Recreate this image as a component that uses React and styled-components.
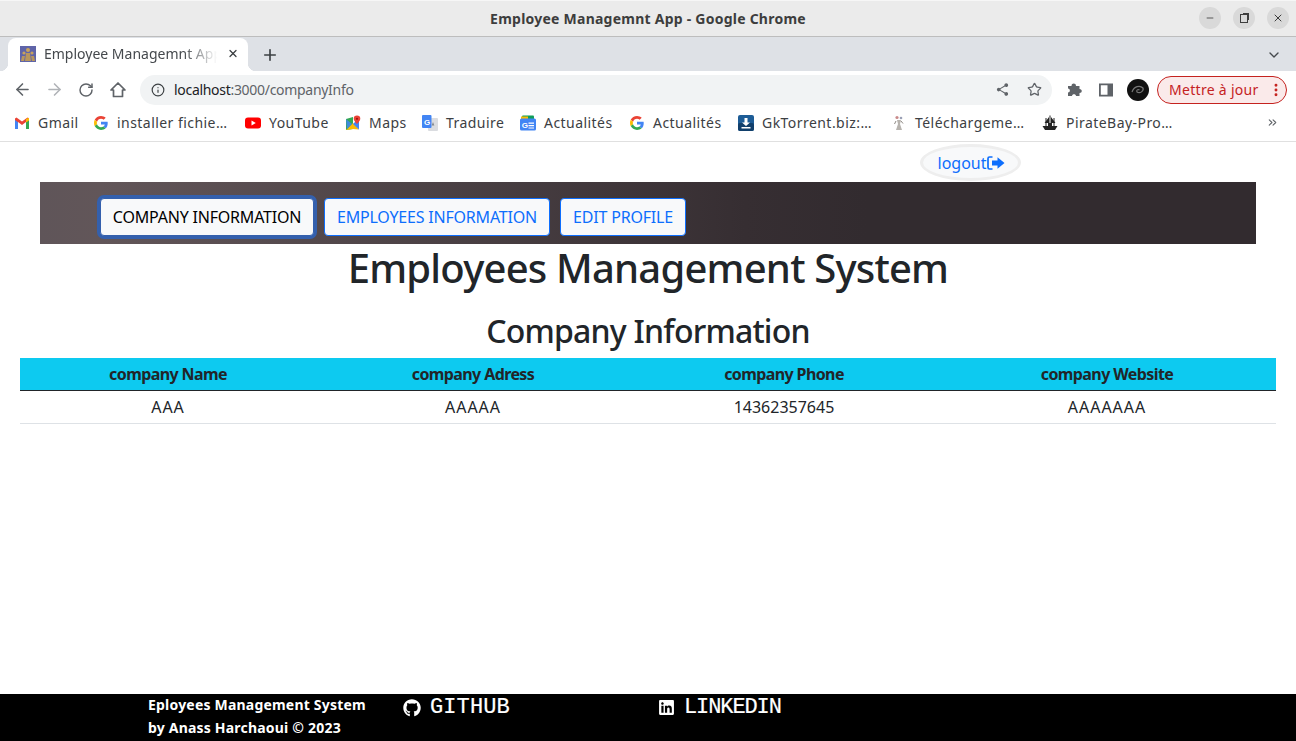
import styled, { createGlobalStyle } from "styled-components";
import {
  ArrowLeft,
  ArrowRight,
  RotateCw,
  Info,
  Star,
  Plus,
  X,
  Minus,
  ChevronDown,
  ChevronsRight,
  EllipsisVertical,
} from "lucide-react";
import { FaGithub, FaLinkedin } from "react-icons/fa";
import { MdShare } from "react-icons/md";

const UI_FONT = `"Noto Sans", "Open Sans", sans-serif`;

const GlobalStyle = createGlobalStyle`
  html, body {
    margin: 0;
    padding: 0;
    background: #fff;
    font-family: ${UI_FONT};
  }
  * { box-sizing: border-box; }
`;

const Page = styled.div`
  width: 1296px;
  height: 741px;
  display: flex;
  flex-direction: column;
  overflow: hidden;
`;

const TitleBar = styled.div`
  height: 37px;
  flex: none;
  background: #ebebeb;
  border-top: 1px solid #f6f6f6;
  border-bottom: 1px solid #bdbdbd;
  display: flex;
  align-items: center;
  justify-content: center;
  position: relative;
`;

const WindowTitle = styled.div`
  font-size: 14px;
  font-weight: 700;
  color: #3d3d3d;
  letter-spacing: 0.24px;
  margin-top: -1px;
`;

const WindowButtons = styled.div`
  position: absolute;
  right: 7px;
  top: 6px;
  display: flex;
  gap: 12px;
`;

const WindowButton = styled.div`
  width: 22px;
  height: 22px;
  border-radius: 50%;
  background: #d9d9d9;
  color: #3d3d3d;
  display: flex;
  align-items: center;
  justify-content: center;
`;

const RestoreIcon = styled.div`
  width: 8px;
  height: 9px;
  border: 1px solid #3d3d3d;
  box-shadow: 2px -2px 0 -1px #3d3d3d;
`;

const TabStrip = styled.div`
  height: 34px;
  flex: none;
  background: #dee1e6;
  display: flex;
  align-items: flex-end;
  padding-left: 8px;
  padding-right: 14px;
`;

const Tab = styled.div`
  width: 240px;
  height: 33px;
  background: #fff;
  border-radius: 8px 8px 0 0;
  display: flex;
  align-items: center;
  padding: 0 9px 2px 12px;
  gap: 8px;
  font-size: 14px;
  color: #45494d;
  position: relative;

  &::before,
  &::after {
    content: "";
    position: absolute;
    bottom: 0;
    width: 8px;
    height: 8px;
  }
  &::before {
    left: -8px;
    background: radial-gradient(circle at 0 0, transparent 8px, #fff 8.5px);
  }
  &::after {
    right: -8px;
    background: radial-gradient(circle at 100% 0, transparent 8px, #fff 8.5px);
  }
`;

const TabTitle = styled.div`
  width: 175px;
  white-space: nowrap;
  -webkit-mask-image: linear-gradient(to right, #000 80%, transparent 99%);
  mask-image: linear-gradient(to right, #000 80%, transparent 99%);
`;

const NewTab = styled.div`
  margin-left: 13px;
  height: 33px;
  display: flex;
  align-items: center;
  color: #3c4043;
`;

const TabMenu = styled.div`
  margin-left: auto;
  height: 33px;
  display: flex;
  align-items: center;
  color: #45494d;
`;

const Toolbar = styled.div`
  height: 37px;
  flex: none;
  background: #fff;
  display: flex;
  align-items: center;
  padding: 0 9px 0 6px;
`;

const ToolButton = styled.div`
  width: 32px;
  height: 32px;
  flex: none;
  display: flex;
  align-items: center;
  justify-content: center;
  color: ${(p) => p.$color || "#5f6368"};
`;

const Omnibox = styled.div`
  flex: 1;
  height: 30px;
  margin: 0 6px;
  background: #f1f3f4;
  border-radius: 15px;
  display: flex;
  align-items: center;
  padding: 0 2px 0 11px;
`;

const Url = styled.div`
  margin-left: 9px;
  flex: 1;
  font-size: 14px;
  letter-spacing: -0.3px;
  color: #5f6368;

  b {
    font-weight: 400;
    color: #202124;
  }
`;

const Avatar = styled.svg`
  width: 22px;
  height: 22px;
`;

const UpdateButton = styled.div`
  margin-left: 3px;
  width: 130px;
  height: 28px;
  flex: none;
  border: 1px solid #c5221f;
  border-radius: 14px;
  background: #faeaea;
  color: #c5221f;
  display: flex;
  align-items: center;
  justify-content: space-between;
  padding: 0 2px 0 11px;
  font-size: 14px;
  letter-spacing: 0.3px;
`;

const BookmarksBar = styled.div`
  height: 34px;
  flex: none;
  background: #fff;
  border-bottom: 1px solid #e0e0e0;
  display: flex;
  align-items: center;
  padding: 0 17px 4px 14px;
`;

const Bookmark = styled.div`
  display: flex;
  align-items: center;
  flex: none;
  width: ${(p) => p.$width}px;
  gap: 8px;
  font-size: 14px;
  letter-spacing: 0.45px;
  color: #3c4043;
  white-space: nowrap;

  svg {
    flex: none;
    width: 16px;
    height: 16px;
  }
`;

const GoogleMark = styled.svg`
  padding: 1px;
`;

const MoreBookmarks = styled.div`
  margin-left: auto;
  display: flex;
  color: #5f6368;
`;

const Content = styled.main`
  flex: 1;
  background: #fff;
  display: flex;
  flex-direction: column;
  padding: 2px 20px 0;
`;

const LogoutRow = styled.div`
  display: flex;
  justify-content: flex-end;
  padding-right: 255px;
`;

const LogoutButton = styled.a`
  width: 101px;
  height: 37px;
  border: 3px solid #eeeeee;
  border-radius: 50%;
  background: #f8f9fa;
  color: #0d6efd;
  display: flex;
  align-items: center;
  justify-content: center;
  padding-left: 1px;
  font-size: 16px;
`;

const NavBanner = styled.nav`
  margin: 1px 20px 0;
  height: 62px;
  background: linear-gradient(90deg, #5f5559 0%, #625659 5%, #362e32 58%, #322b2f 68%);
  display: flex;
  align-items: center;
  gap: 10px;
  padding: 8px 0 0 60px;
`;

const NavButton = styled.a`
  height: 38px;
  padding: 0 12px;
  display: flex;
  align-items: center;
  background: #f8f9fa;
  border: 1px solid #0d6efd;
  border-radius: 4px;
  font-size: 16px;
  letter-spacing: -0.2px;
  white-space: nowrap;
  width: ${(p) => p.$width}px;
  justify-content: center;
  color: ${(p) => (p.$active ? "#000" : "#0d6efd")};
  box-shadow: ${(p) => (p.$active ? "0 0 0 3px #3460ad" : "none")};
  border-color: ${(p) => (p.$active ? "#3460ad" : "#0d6efd")};
`;

const MainTitle = styled.h1`
  margin: 0;
  height: 48px;
  line-height: 48px;
  text-align: center;
  font-size: 40px;
  font-weight: 500;
  letter-spacing: -0.8px;
  color: #212529;
`;

const SubTitle = styled.h2`
  margin: 20px 0 8px;
  height: 38px;
  line-height: 38px;
  text-align: center;
  font-size: 32px;
  font-weight: 500;
  letter-spacing: -0.8px;
  color: #212529;
`;

const Table = styled.table`
  width: 1256px;
  border-collapse: collapse;
  table-layout: fixed;
  font-size: 16px;
  color: #212529;
`;

const HeadCell = styled.th`
  height: 32px;
  padding: 0;
  background: #0dcaf0;
  border-bottom: 1px solid #212529;
  font-weight: 700;
  letter-spacing: -0.6px;
  text-align: center;
  width: ${(p) => p.$width}px;
`;

const Cell = styled.td`
  height: 33px;
  padding: 0;
  border-bottom: 1px solid #dee2e6;
  text-align: center;
  letter-spacing: ${(p) => p.$spacing}px;
`;

const Footer = styled.footer`
  height: 47px;
  flex: none;
  background: #000;
  color: #fff;
  padding: 0 0 0 148px;
  display: grid;
  grid-template-columns: 255px 255px 1fr;
`;

const Credits = styled.div`
  font-size: 14px;
  font-weight: 700;
  line-height: 23px;
  letter-spacing: 0.2px;
  margin-top: -1px;
`;

const SocialLink = styled.a`
  display: flex;
  align-items: center;
  gap: 9px;
  height: 27px;
  color: #fff;
`;

const SocialText = styled.span`
  font-family: "Liberation Mono", monospace;
  font-size: 22px;
  letter-spacing: ${(p) => p.$spacing}px;
  -webkit-text-stroke: 0.2px #fff;
`;

const TabFavicon = () => (
  <svg width="16" height="16" viewBox="0 0 16 16" style={{ flex: "none" }}>
    <rect width="16" height="16" fill="#5f64a8" />
    <circle cx="8" cy="4" r="2" fill="#c9a35c" />
    <circle cx="4" cy="7" r="1.6" fill="#c9a35c" />
    <circle cx="12" cy="7" r="1.6" fill="#c9a35c" />
    <path d="M5 15 L6 7 H10 L11 15Z M1 15 L2 10 H5 L4 15Z M15 15 L14 10 H11 L12 15Z" fill="#b8965c" />
  </svg>
);

const HomeIcon = () => (
  <svg width="18" height="18" viewBox="0 0 18 18">
    <path d="M9 2 L16 9 H13.5 V15.5 H4.5 V9 H2Z" fill="none" stroke="currentColor" strokeWidth="1.7" strokeLinejoin="round" />
  </svg>
);

const PuzzleIcon = () => (
  <svg width="17" height="17" viewBox="0 0 17 17">
    <path d="M2 5 H5.5 C5.5 1.8 10 1.8 10 5 H13.5 V8 C16.5 8 16.5 12 13.5 12 V15 H10 C10 12.5 6 12.5 6 15 H2 V11.5 C4.5 11.5 4.5 7.5 2 7.5Z" fill="currentColor" />
  </svg>
);

const GmailIcon = () => (
  <svg viewBox="0 0 16 16">
    <path d="M1 3.5 V14 H4 V7 L8 10 L12 7 V14 H15 V3.5 L13.5 2.5 L8 6.5 L2.5 2.5Z" fill="#ea4335" />
    <path d="M1 5 V14 H4 V7.2Z" fill="#4285f4" />
    <path d="M15 5 V14 H12 V7.2Z" fill="#34a853" />
    <path d="M12 4 L15 2.8 V5.5 L12 7.5Z" fill="#fbbc04" />
  </svg>
);

const GoogleIcon = () => (
  <GoogleMark viewBox="0 0 48 48">
    <path fill="#EA4335" d="M24 9.5c3.5 0 6.7 1.2 9.2 3.6l6.9-6.9C35.9 2.4 30.5 0 24 0 14.6 0 6.5 5.4 2.6 13.2l8 6.2C12.4 13.7 17.7 9.5 24 9.5z" />
    <path fill="#4285F4" d="M47 24.5c0-1.6-.1-3.1-.4-4.5H24v9h12.9c-.6 3-2.2 5.5-4.7 7.2l7.7 6c4.5-4.2 7.1-10.3 7.1-17.7z" />
    <path fill="#FBBC05" d="M10.5 28.6c-.5-1.4-.8-3-.8-4.6s.3-3.2.8-4.6l-8-6.2C.9 16.5 0 20.1 0 24s.9 7.5 2.6 10.8l7.9-6.2z" />
    <path fill="#34A853" d="M24 48c6.5 0 11.9-2.1 15.9-5.8l-7.7-6c-2.2 1.4-4.9 2.3-8.2 2.3-6.3 0-11.6-4.2-13.5-10l-8 6.2C6.5 42.6 14.6 48 24 48z" />
  </GoogleMark>
);

const YoutubeIcon = () => (
  <svg viewBox="0 0 16 16">
    <rect x="0" y="2.5" width="16" height="11" rx="3" fill="#f00" />
    <path d="M6.5 5.5 L10.8 8 L6.5 10.5Z" fill="#fff" />
  </svg>
);

const MapsIcon = () => (
  <svg viewBox="0 0 16 16">
    <path d="M1 4 L8 2 V14 L1 15Z" fill="#34a853" />
    <path d="M1 15 L8 8 L14 14.5 L8 14Z" fill="#fbbc04" />
    <path d="M1 4 L7 9 L2 14Z" fill="#4285f4" opacity="0.85" />
    <path d="M8 9 L14 3 V14.5Z" fill="#4285f4" />
    <path d="M12 0.5 a3.3 3.3 0 0 1 3.3 3.3 C15.3 6 12 9 12 9 S8.7 6 8.7 3.8 A3.3 3.3 0 0 1 12 0.5Z" fill="#ea4335" />
    <circle cx="12" cy="3.8" r="1.1" fill="#a50e0e" />
  </svg>
);

const TranslateIcon = () => (
  <svg viewBox="0 0 16 16">
    <rect x="6" y="3" width="10" height="13" rx="1" fill="#dadce0" />
    <path d="M11 7 L12.3 10.5 H9.7Z" fill="#80868b" />
    <rect x="0" y="0" width="9.5" height="13" rx="1" fill="#4285f4" />
    <text x="2" y="9.5" fontSize="8" fontWeight="700" fill="#fff" fontFamily="Liberation Sans, sans-serif">G</text>
  </svg>
);

const NewsIcon = () => (
  <svg viewBox="0 0 16 16">
    <rect x="2" y="0.5" width="12" height="6" rx="1" fill="#0f9d58" />
    <rect x="1" y="1.5" width="7" height="4" fill="#fbbc04" />
    <rect x="0" y="3.5" width="16" height="12" rx="1.5" fill="#4285f4" />
    <text x="1.7" y="12.8" fontSize="8" fontWeight="700" fill="#fff" fontFamily="Liberation Sans, sans-serif">G</text>
    <path d="M8.5 7.5 H14 V8.7 H8.5Z M8.5 10 H14 V11.2 H8.5Z M8.5 12.4 H14 V13.5 H8.5Z" fill="#fff" />
  </svg>
);

const TorrentIcon = () => (
  <svg viewBox="0 0 16 16">
    <rect width="16" height="16" rx="2" fill="#1d5c96" />
    <rect y="8" width="16" height="8" rx="2" fill="#113f6b" />
    <path d="M6.5 3 H9.5 V7.5 H12 L8 11 L4 7.5 H6.5Z M3.5 12 H12.5 V13.5 H3.5Z" fill="#fff" />
  </svg>
);

const FigureIcon = () => (
  <svg viewBox="0 0 16 16">
    <circle cx="6" cy="2.5" r="1.6" fill="#c98a8a" />
    <circle cx="10" cy="3" r="1.3" fill="#9aa0b5" />
    <path d="M6 5 L10 5 L9 9 L11 15 H5 L7 9Z" fill="#b7b3ae" />
    <path d="M5 6 L3.5 9 M10 6 L12 8.5" stroke="#8f8a85" strokeWidth="1" />
  </svg>
);

const ShipIcon = () => (
  <svg viewBox="0 0 16 16">
    <path d="M8 0.5 V12 M4 3 V12 M12 3 V12" stroke="#222" strokeWidth="1" />
    <path d="M7 2 L2.5 8 H7Z M9 2 L13.5 8 H9Z M6 8 H10 V11 H6Z" fill="#222" />
    <path d="M0.5 11 H15.5 L13 15 H3Z" fill="#222" />
  </svg>
);

const SidePanelIcon = () => (
  <svg width="16" height="16" viewBox="0 0 16 16">
    <path fillRule="evenodd" d="M1 1.5 H15 V14.5 H1Z M2.8 3.3 V12.7 H9.5 V3.3Z" fill="#5f6368" />
  </svg>
);

const LogoutIcon = () => (
  <svg width="18" height="14" viewBox="0 0 18 14" style={{ flex: "none" }}>
    <path d="M5.5 1 H2.5 Q1 1 1 2.5 V11.5 Q1 13 2.5 13 H5.5" fill="none" stroke="#0d6efd" strokeWidth="1.7" />
    <path d="M5 4.6 H10.5 V1.2 L17.5 7 L10.5 12.8 V9.4 H5Z" fill="#0d6efd" />
  </svg>
);

const bookmarks = [
  { icon: <GmailIcon />, label: "Gmail", width: 79 },
  { icon: <GoogleIcon />, label: "installer fichie…", width: 152 },
  { icon: <YoutubeIcon />, label: "YouTube", width: 100 },
  { icon: <MapsIcon />, label: "Maps", width: 77 },
  { icon: <TranslateIcon />, label: "Traduire", width: 98 },
  { icon: <NewsIcon />, label: "Actualités", width: 109 },
  { icon: <GoogleIcon />, label: "Actualités", width: 109 },
  { icon: <TorrentIcon />, label: "GkTorrent.biz:…", width: 153 },
  { icon: <FigureIcon />, label: "Téléchargeme…", width: 151 },
  { icon: <ShipIcon />, label: "PirateBay-Pro…", width: 130 },
];

const columns = [
  { title: "company Name", value: "AAA", width: 296, spacing: 1 },
  { title: "company Adress", value: "AAAAA", width: 314, spacing: 1 },
  { title: "company Phone", value: "14362357645", width: 308, spacing: 0 },
  { title: "company Website", value: "AAAAAAA", width: 338, spacing: 1 },
];

export default function App() {
  return (
    <Page>
      <GlobalStyle />

      <TitleBar>
        <WindowTitle>Employee Managemnt App - Google Chrome</WindowTitle>
        <WindowButtons>
          <WindowButton>
            <Minus size={10} />
          </WindowButton>
          <WindowButton>
            <RestoreIcon />
          </WindowButton>
          <WindowButton>
            <X size={12} />
          </WindowButton>
        </WindowButtons>
      </TitleBar>

      <TabStrip>
        <Tab>
          <TabFavicon />
          <TabTitle>Employee Managemnt App</TabTitle>
          <X size={13} color="#3c4043" strokeWidth={2.5} />
        </Tab>
        <NewTab>
          <Plus size={18} strokeWidth={2.2} />
        </NewTab>
        <TabMenu>
          <ChevronDown size={16} />
        </TabMenu>
      </TabStrip>

      <Toolbar>
        <ToolButton>
          <ArrowLeft size={19} />
        </ToolButton>
        <ToolButton $color="#b0b3b7">
          <ArrowRight size={19} />
        </ToolButton>
        <ToolButton>
          <RotateCw size={16} strokeWidth={2.2} />
        </ToolButton>
        <ToolButton>
          <HomeIcon />
        </ToolButton>
        <Omnibox>
          <Info size={14} color="#3c4043" />
          <Url>
            <b>localhost</b>:3000/companyInfo
          </Url>
          <ToolButton>
            <MdShare size={15} />
          </ToolButton>
          <ToolButton>
            <Star size={15} />
          </ToolButton>
        </Omnibox>
        <ToolButton>
          <PuzzleIcon />
        </ToolButton>
        <ToolButton>
          <SidePanelIcon />
        </ToolButton>
        <ToolButton>
          <Avatar viewBox="0 0 22 22">
            <circle cx="11" cy="11" r="11" fill="#111" />
            <path d="M5 13 C7 7 13 6 16 9 C17 12 13 15 10 13 C9 11 11 10 12.5 11" fill="none" stroke="#777" strokeWidth="1.2" />
          </Avatar>
        </ToolButton>
        <UpdateButton>
          Mettre à jour
          <EllipsisVertical size={16} strokeWidth={2.4} />
        </UpdateButton>
      </Toolbar>

      <BookmarksBar>
        {bookmarks.map((b, i) => (
          <Bookmark key={i} $width={b.width}>
            {b.icon}
            {b.label}
          </Bookmark>
        ))}
        <MoreBookmarks>
          <ChevronsRight size={13} />
        </MoreBookmarks>
      </BookmarksBar>

      <Content>
        <LogoutRow>
          <LogoutButton>
            logout
            <LogoutIcon />
          </LogoutButton>
        </LogoutRow>

        <NavBanner>
          <NavButton $active $width={214}>COMPANY INFORMATION</NavButton>
          <NavButton $width={226}>EMPLOYEES INFORMATION</NavButton>
          <NavButton $width={126}>EDIT PROFILE</NavButton>
        </NavBanner>

        <MainTitle>Employees Management System</MainTitle>
        <SubTitle>Company Information</SubTitle>

        <Table>
          <thead>
            <tr>
              {columns.map((c) => (
                <HeadCell key={c.title} $width={c.width}>
                  {c.title}
                </HeadCell>
              ))}
            </tr>
          </thead>
          <tbody>
            <tr>
              {columns.map((c) => (
                <Cell key={c.title} $spacing={c.spacing}>{c.value}</Cell>
              ))}
            </tr>
          </tbody>
        </Table>
      </Content>

      <Footer>
        <Credits>
          Eployees Management System
          <br />
          by Anass Harchaoui © 2023
        </Credits>
        <SocialLink>
          <FaGithub size={18} />
          <SocialText $spacing={0.1}>GITHUB</SocialText>
        </SocialLink>
        <SocialLink>
          <FaLinkedin size={17} />
          <SocialText $spacing={-1.1}>LINKEDIN</SocialText>
        </SocialLink>
      </Footer>
    </Page>
  );
}
